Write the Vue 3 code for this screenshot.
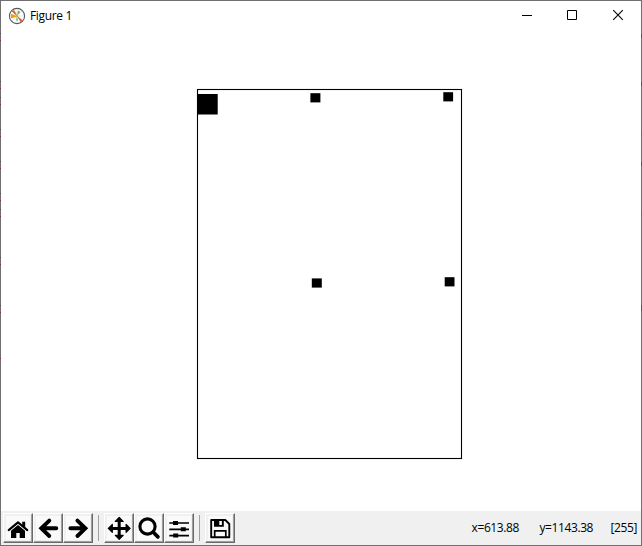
<script setup>
const markers = [
  { x: 197, y: 94, w: 20.7, h: 20.5 },
  { x: 310.4, y: 93.2, w: 10, h: 9.2 },
  { x: 443.3, y: 92.2, w: 9.8, h: 9.2 },
  { x: 311.8, y: 278.4, w: 10, h: 9.2 },
  { x: 444.7, y: 277.2, w: 9.8, h: 9.2 },
]
const leftSpecks = [33, 40, 81, 88, 97, 104, 129, 136, 161, 168, 193, 200, 209, 216, 257, 264, 305, 312, 358]
const rightSpecks = [{ y: 34, h: 4 }, { y: 82, h: 4 }, { y: 134, h: 1 }, { y: 162, h: 4 }, { y: 214, h: 1 }, { y: 305, h: 6 }]
const groups = [['home', 'back', 'forward'], ['pan', 'zoom', 'sliders'], ['save']]
</script>

<template>
  <div class="window">
    <header class="titlebar">
      <svg class="logo" width="18" height="18" viewBox="0 0 18 18">
        <circle cx="9" cy="9" r="7.6" fill="#fff" stroke="#555b60" stroke-width="1.1" />
        <path d="M9 2v14M2 9h14M4 4l10 10M14 4L4 14" stroke="#c0c4c7" stroke-width=".5" />
        <path d="M9.500 9.500 3.800 4.500 6.200 3Z" fill="#e05f20" />
        <path d="M9.500 9.300 3 6.700v4.800Z" fill="#f0a000" />
        <path d="M8.500 8.300 12.800 15.200l2-1.800Z" fill="#ea5a20" />
        <path d="M9 9 10 3.500l2.400 1.200Z" fill="#6fb850" />
        <path d="M9 9 7.600 13.500l2.600.3Z" fill="#70d090" />
      </svg>
      <span class="title">Figure 1</span>
      <svg class="controls" width="104" height="12" viewBox="0 0 104 12" fill="none" stroke="#000">
        <path d="M0 6.500h10M45.500 1.500h9v9h-9z" />
        <path d="M91.200 1.200l9.600 9.600M100.800 1.200l-9.600 9.600" stroke-width="1.100" />
      </svg>
    </header>
    <main class="figure">
      <svg width="640" height="480" viewBox="1 31 640 480">
        <g class="markers">
          <rect v-for="(m, i) in markers" :key="i" :x="m.x" :y="m.y" :width="m.w" :height="m.h" />
        </g>
        <rect x="197.500" y="89.500" width="264" height="369" fill="none" stroke="#000" stroke-width="1.100" />
      </svg>
    </main>
    <footer class="toolbar">
      <div v-for="(g, i) in groups" :key="i" class="group">
        <button v-for="name in g" :key="name" class="tool" :aria-label="name">
          <svg width="24" height="24" viewBox="0 0 24 24">
            <g v-if="name === 'home'">
              <path d="M2.700 14.100 12 6.400l9.300 7.700" fill="none" stroke="#000" stroke-width="2.100" stroke-linecap="round" stroke-linejoin="round" />
              <path d="M16.200 5.800h3V11.500l-3-2.600zM5 14.800l7-5.800 7 5.800V22h-5.300v-5h-3.400v5H5z" />
            </g>
            <path v-else-if="name === 'back'" d="M13.300 4.600 5.300 12.300l8 7.700M6 12.300h14.300" fill="none" stroke="#000" stroke-width="3.900" stroke-linecap="round" />
            <path v-else-if="name === 'forward'" d="M11.400 4.600 19.400 12.300l-8 7.700M18.700 12.300H4.400" fill="none" stroke="#000" stroke-width="3.900" stroke-linecap="round" />
            <g v-else-if="name === 'pan'" transform="translate(.2 .4)" stroke="#000" stroke-linejoin="round">
              <path d="M12 4v16M4 12h16" stroke-width="3" />
              <path d="M12 1.100l3.900 4H8.100zM12 22.900l3.900-4H8.100zM1.100 12l4-3.900v7.800zM22.900 12l-4-3.900v7.800z" stroke-width="1.200" />
            </g>
            <g v-else-if="name === 'zoom'" fill="none" stroke="#000">
              <circle cx="10.500" cy="10.500" r="7.600" stroke-width="3.100" />
              <path d="M16.300 16.300 20.900 20.900" stroke-width="3.700" stroke-linecap="round" />
            </g>
            <g v-else-if="name === 'sliders'">
              <path d="M2.300 7h19.700M2.300 13.300h19.700M2.300 19.600h19.700" stroke="#000" stroke-width="1.700" />
              <path d="M6 5h5v4H6zM13.800 11.300h5v4h-5zM6.200 17.600h5v4h-5z" />
            </g>
            <g v-else>
              <path d="M3.200 4h14.100l4 4v13.200H3.200z" fill="none" stroke="#000" stroke-width="1.900" stroke-linejoin="round" />
              <path d="M6.700 21v-6.200h11.100V21" fill="none" stroke="#000" stroke-width="1.700" />
              <path d="M6 3.500h9.800v7.200H6zM11.300 4.700V9h2.600V4.700z" fill-rule="evenodd" />
            </g>
          </svg>
        </button>
      </div>
      <div class="status"><span class="xpos">x=613.88</span><span class="ypos">y=1143.38</span><span class="value">[255]</span></div>
    </footer>
    <svg class="edge" width="642" height="546" viewBox="0 0 642 546">
      <rect v-for="y in leftSpecks" :key="y" x="0" :y="y" width="1" height="1" fill="#7b3a2c" />
      <rect v-for="s in rightSpecks" :key="'r' + s.y" x="641" :y="s.y" width="1" :height="s.h" fill="#79474a" />
    </svg>
  </div>
</template>

<style>
body { margin: 0; overflow: hidden; }
</style>
<style scoped>
.window {
  position: relative;
  box-sizing: border-box;
  width: 642px;
  height: 546px;
  display: flex;
  flex-direction: column;
  border: 1px solid #707070;
  background: #fff;
  color: #000;
  font: 12px "Open Sans", "Noto Sans", sans-serif;
}
.edge { position: absolute; left: -1px; top: -1px; pointer-events: none; }
.titlebar { display: flex; align-items: center; height: 30px; flex: none; padding: 0 15px 0 7px; box-sizing: border-box; }
.logo { margin-top: -1px; }
.title { margin-left: 4px; margin-top: -1px; letter-spacing: -.33px; }
.controls { margin-left: auto; margin-top: -2px; }
.figure { height: 480px; flex: none; }
.figure svg { display: block; }
.markers { filter: blur(.45px); }
.toolbar { display: flex; flex: 1; background: #f0f0f0; padding: 2px 0 0 2px; }
.group { display: flex; align-items: flex-start; }
.group + .group { position: relative; margin-left: 5px; padding-left: 6px; }
.group + .group::before { content: ""; position: absolute; left: 0; top: 2px; width: 1px; height: 26px; background: #a0a0a0; }
.tool {
  display: grid;
  place-items: center;
  box-sizing: border-box;
  width: 30px;
  height: 30px;
  padding: 0 1px 1px 0;
  border: 1px solid;
  border-color: #fff #696969 #696969 #fff;
  background: #f0f0f0;
  box-shadow: inset -1px -1px #a0a0a0;
}
.tool svg { display: block; background: #fafafa; }
.status { display: flex; margin-left: auto; padding: 6px 4px 0 0; line-height: 17px; white-space: pre; letter-spacing: -.4px; }
.ypos { margin-left: 20.500px; }
.value { margin-left: 17.500px; }
</style>
